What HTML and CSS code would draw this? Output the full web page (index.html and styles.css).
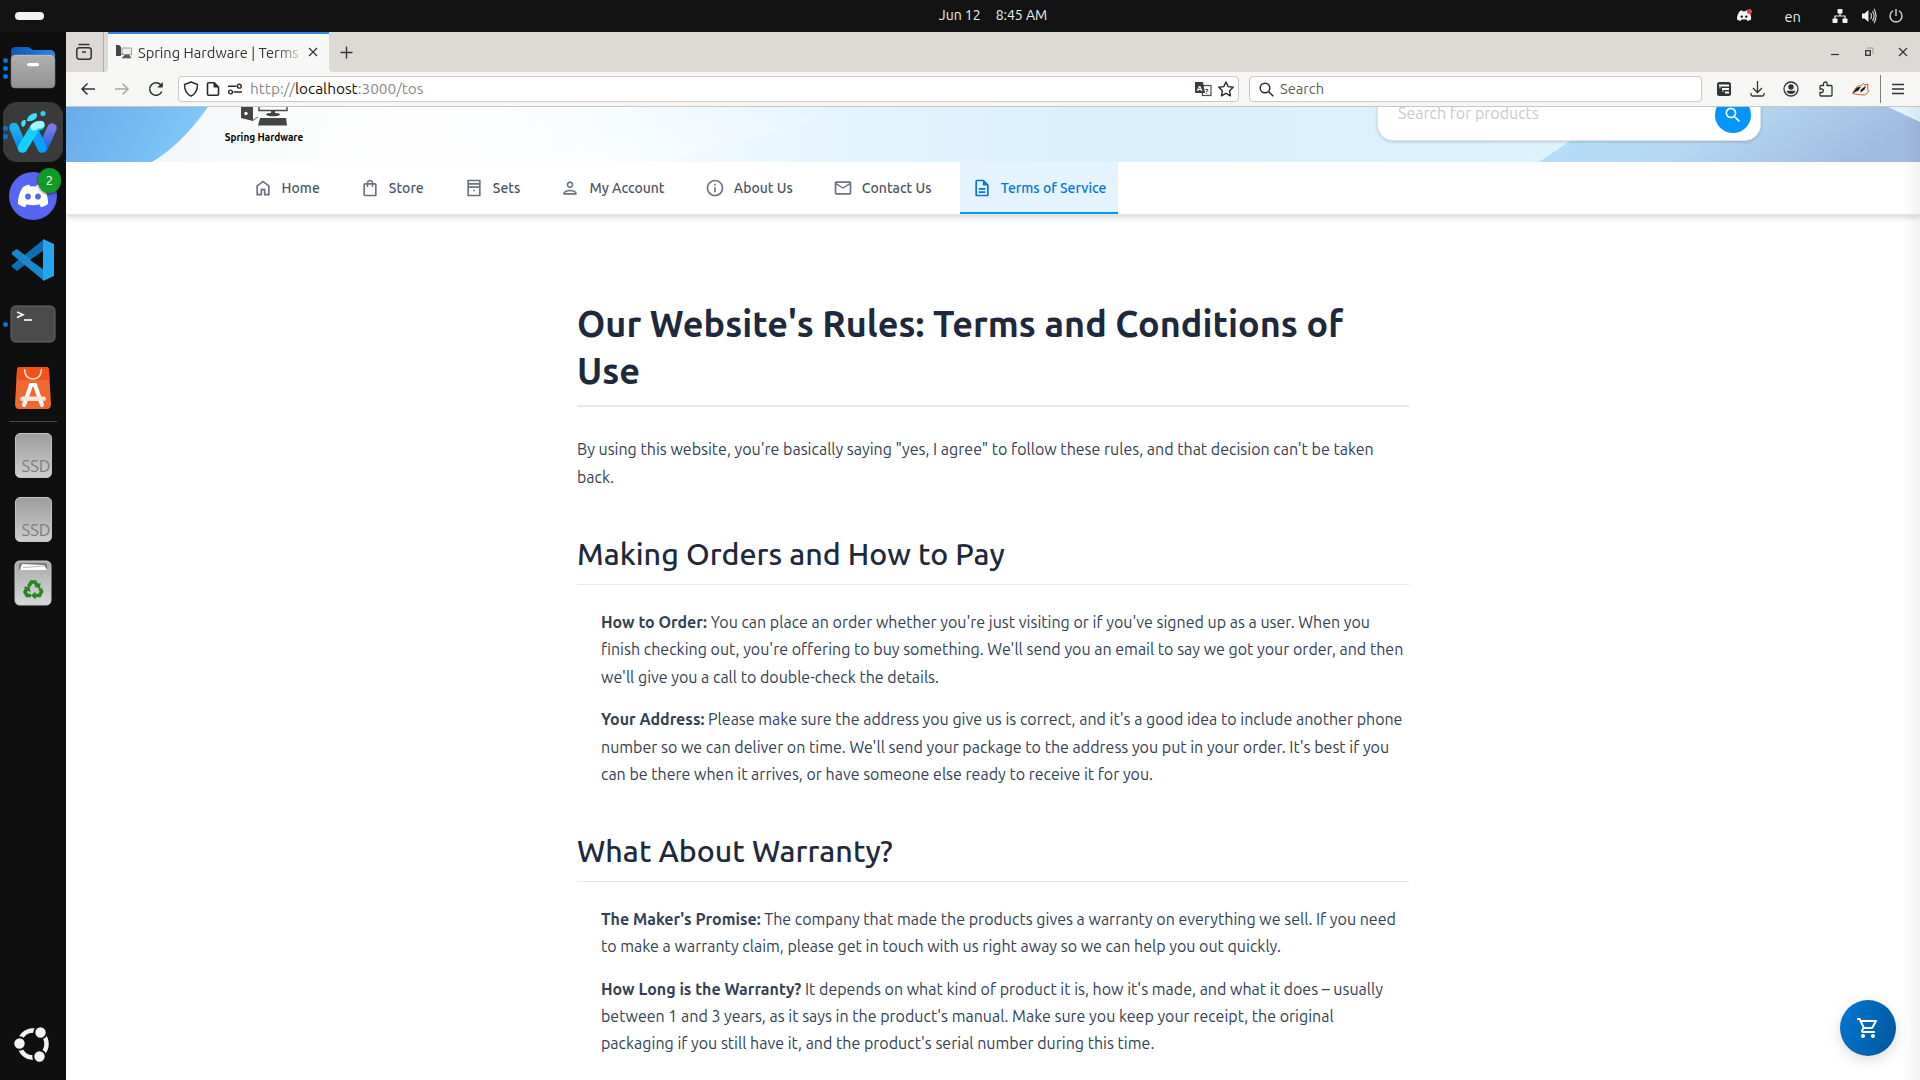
FILE: index.html
```html
<!DOCTYPE html>
<html lang="en">
<head>
<meta charset="utf-8">
<title>Spring Hardware | Terms of Service</title>
<link rel="stylesheet" href="styles.css">
</head>
<body>
<div class="desktop">
  <header class="topbar">
    <div class="activities"><span class="pill"></span></div>
    <div class="clock"><span>Jun 12</span><span>8:45 AM</span></div>
    <div class="tray">
      <svg class="tray-discord" width="17" height="14" viewBox="0 0 17 14"><path d="M4 2 6 1.3l.5 1h3L10 1.300l3 1c1.500 2.500 2.500 5 2 8.500L11.500 12l-1-1.500h-5L4.500 12 1 10.800C.8 7 2 4 4 2z" fill="#f2f2f2"/><circle cx="5.800" cy="7.600" r="1.200" fill="#131313"/><circle cx="10.200" cy="7.600" r="1.200" fill="#131313"/><circle cx="13.500" cy="2.500" r="2.500" fill="#f23f43"/></svg>
      <span class="lang">en</span>
      <svg width="16" height="16" viewBox="0 0 16 16" fill="#f2f2f2"><rect x="5.500" y="1" width="5" height="4.500" rx=".8"/><rect x="0.500" y="10.500" width="5" height="4.500" rx=".8"/><rect x="10.500" y="10.500" width="5" height="4.500" rx=".8"/><path d="M8 5v3M3 11V8h10v3" fill="none" stroke="#f2f2f2" stroke-width="1.200"/></svg>
      <svg class="tray-volume" width="16" height="16" viewBox="0 0 16 16"><path d="M1 5.500h2.500L7.500 2v12l-4-3.500H1z" fill="#f2f2f2"/><path d="M9.500 5q2 3 0 6M11.500 3.200q3.300 4.800 0 9.600M13 .8q4 7 0 14.400" fill="none" stroke="#d0d0d0" stroke-width="1.200"/></svg>
      <svg class="tray-power" width="16" height="16" viewBox="0 0 16 16" fill="none" stroke="#e4e4e4" stroke-width="1.300"><path d="M8 1v7M5 2.800a6 6 0 1 0 6 0"/></svg>
    </div>
  </header>

  <aside class="dock">
    <div class="slot"><i class="dots"><b></b><b></b><b></b></i>
      <svg width="46" height="42" viewBox="0 0 46 42"><defs><linearGradient id="fb" x1="0" y1="0" x2="1" y2="0"><stop offset="0" stop-color="#0b57b5"/><stop offset="1" stop-color="#2f86e8"/></linearGradient><linearGradient id="fg" x1="0" y1="0" x2="0" y2="1"><stop offset="0" stop-color="#b0b0b0"/><stop offset="1" stop-color="#929292"/></linearGradient></defs><path d="M1 13V4q0-4 4-4h12q2 0 3 1l3 2h17q5 0 5 5v9H1z" fill="url(#fb)"/><rect x="1" y="8" width="44" height="33" rx="4" fill="url(#fg)" stroke="#777" stroke-width=".6"/><path d="M4 8.400h38" stroke="#d0d0d0" stroke-width=".7"/><rect x="17" y="16" width="12" height="3.200" rx="1.600" fill="#fff"/></svg></div>
    <div class="slot slot-active"><i class="dots"><b></b><b></b></i>
      <svg width="60" height="60" viewBox="0 0 60 60"><defs><linearGradient id="w1" x1="0" y1="0" x2="0" y2="1"><stop offset="0" stop-color="#1ab5ee"/><stop offset="1" stop-color="#0a84f5"/></linearGradient><linearGradient id="w2" x1="0" y1="0" x2="0" y2="1"><stop offset="0" stop-color="#7a78ea"/><stop offset="1" stop-color="#1769e8"/></linearGradient></defs><g fill="none" stroke-linecap="round" stroke-linejoin="round"><path d="M49 26 40 46" stroke="url(#w2)" stroke-width="9.500"/><path d="M11 25.500 19.500 46" stroke="url(#w1)" stroke-width="9.500"/><path d="m31 29 8 17" stroke="#0a9ff8" stroke-width="9.500"/><path d="M19.500 46 31 27q2-3.500 6-3.500" stroke="#12d2fb" stroke-width="9.500"/><path d="M31 25q3-2.500 7-2.500" stroke="#a5f7fb" stroke-width="7"/></g><path d="M24 19c0-5 5-8 9.500-8 2 4-2 9-9.500 8z" fill="#35e3fb"/><circle cx="40" cy="11.500" r="2.600" fill="#2bd0f0"/><path d="M18.500 23c-1-3 .5-5 4-5 1 4-1 7-3 7z" fill="#35e3fb"/></svg></div>
    <div class="slot">
      <svg width="52" height="56" viewBox="0 0 52 56"><circle cx="26" cy="28" r="24" fill="#5865f2"/><path d="M16 19q3-2 6-2.500l1.200 2q2.800-.4 5.600 0l1.200-2q3 .5 6 2.500 5.500 8 5 17-3 2.400-7 3.300l-1.700-3q-6.300 1.800-12.600 0l-1.700 3q-4-.9-7-3.300-.5-9 5-17z" fill="#fff"/><ellipse cx="21" cy="28.500" rx="2.900" ry="3.100" fill="#5865f2"/><ellipse cx="31" cy="28.500" rx="2.900" ry="3.100" fill="#5865f2"/></svg><span class="badge">2</span></div>
    <div class="slot">
      <svg width="42" height="42" viewBox="0 0 42 42"><path d="M31 1v11L5 32 0 28V26z" fill="#0f6fb3"/><path d="M31 41V30L5 10 0 13v2.500z" fill="#1b87cf"/><path d="m31 0 11 5v32l-11 5z" fill="#27a5ef"/><path d="m31 12-13 9 13 9z" fill="#0f0f0f"/></svg></div>
    <div class="slot"><i class="dots"><b></b></i>
      <svg width="46" height="38" viewBox="0 0 46 38"><rect x="1" y="1" width="44" height="36" rx="4.500" fill="#4b4b4b" stroke="#6a6a6a"/><path d="m7 7 6 2.700-6 2.700" fill="none" stroke="#fff" stroke-width="1.600"/><path d="M14 15h8" stroke="#fff" stroke-width="1.600"/></svg></div>
    <div class="slot">
      <svg width="38" height="42" viewBox="0 0 38 42"><path d="M6 0h26q3 0 3 3l2 34q0 5-4 5H5q-4 0-4-5L3 3q0-3 3-3z" fill="#f0672f"/><path d="M6 0h26q3 0 3 3l.6 10H2.400L3 3q0-3 3-3z" fill="#f4511a"/><path d="M10.500 2q.5 10 8.500 10t8.500-10" fill="none" stroke="#ffe6da" stroke-width="1.600"/><path d="M17 18 10 38M21 18l7 20M16.500 18h5" stroke="#fff" stroke-width="4" fill="none" stroke-linecap="round"/><rect x="6" y="29.500" width="26" height="4.500" rx="2.200" fill="#fde3d8"/></svg></div>
    <hr class="dock-line">
    <div class="slot"><div class="ssd">SSD</div></div>
    <div class="slot"><div class="ssd">SSD</div></div>
    <div class="slot">
      <svg width="38" height="46" viewBox="0 0 38 46"><defs><linearGradient id="tg" x1="0" y1="0" x2="0" y2="1"><stop offset="0" stop-color="#aaa"/><stop offset="1" stop-color="#d8d8d8"/></linearGradient></defs><rect x="1" y="1" width="36" height="44" rx="4.500" fill="url(#tg)" stroke="#c8c8c8"/><path d="M5 10V6q0-3 3-3h22q3 0 3 3v4z" fill="#777"/><path d="m6 10 2-6 22 1 3 5z" fill="#fff"/><path d="M9 7.500 30 6" stroke="#888" stroke-width=".6"/><g fill="none" stroke="#26871f" stroke-width="3.600"><path d="m14.500 26.500 3-4.500h3.500l2.500 4"/><path d="m26 28.500 1.500 3-2 4H20"/><path d="M17 35.500h-4l-2-3.500 2-3.500"/></g><g fill="#26871f"><path d="m26.500 22.500-.5 6.500-5.500-2.500zM21.500 31.500v8l-4.500-4zM9.500 27l6-.5 1 6z"/></g></svg></div>
    <div class="spacer"></div>
    <div class="launcher">
      <svg width="40" height="40" viewBox="0 0 40 40"><circle cx="20" cy="20" r="13.500" fill="none" stroke="#f2f2f2" stroke-width="4.500"/><g fill="#f2f2f2" stroke="#0f0f0f" stroke-width="2"><circle cx="6.500" cy="19.500" r="6.200"/><circle cx="27.500" cy="8.500" r="6.200"/><circle cx="26.500" cy="32.500" r="6.200"/></g></svg></div>
  </aside>

  <main class="window">
    <div class="tabs">
      <div class="tab-view"><svg width="18" height="18" viewBox="0 0 18 18" fill="none" stroke="#2e3436" stroke-width="1.500"><path d="M3.500 1.500h11"/><rect x="1.800" y="4.800" width="14.400" height="11.400" rx="2.500"/><path d="M7 9h4"/></svg></div>
      <div class="tab">
        <svg width="16" height="14" viewBox="0 0 16 14"><path d="M0 0h3l2 2v9H0z" fill="#444"/><path d="M6 3h9.500v6.500H6z" fill="#eee" stroke="#888" stroke-width=".8"/><path d="M9 10h4l2 3H6zM4 11l3-3" fill="#555" stroke="#666" stroke-width=".7"/></svg>
        <span class="tab-title">Spring Hardware | Terms of Service</span>
        <svg width="10" height="10" viewBox="0 0 10 10"><path d="m1 1 8 8M9 1 1 9" stroke="#2e3436" stroke-width="1.200"/></svg>
      </div>
      <div class="tab-rest">
        <svg width="13" height="13" viewBox="0 0 13 13"><path d="M6.500.5v12M.5 6.500h12" stroke="#2e3436" stroke-width="1.400"/></svg>
        <div class="win-buttons">
          <svg width="10" height="10" viewBox="0 0 10 10"><path d="M1 7.500h8" stroke="#2e3436" stroke-width="1.200"/></svg>
          <svg width="10" height="10" viewBox="0 0 10 10" fill="none"><path d="M3 1h6v6" stroke="#999" stroke-width="1"/><rect x="1.700" y="3.700" width="4.600" height="4.600" stroke="#2e3436" stroke-width="1.300"/></svg>
          <svg width="10" height="10" viewBox="0 0 10 10"><path d="m1 1 8 8M9 1 1 9" stroke="#2e3436" stroke-width="1.200"/></svg>
        </div>
      </div>
    </div>

    <div class="toolbar">
      <div class="nav-buttons">
        <svg width="16" height="16" viewBox="0 0 16 16" fill="none" stroke="#2e3436" stroke-width="1.500"><path d="M15 8H2M7.500 2.500 2 8l5.500 5.500"/></svg>
        <svg width="16" height="16" viewBox="0 0 16 16" fill="none" stroke="#a8a8a6" stroke-width="1.500"><path d="M1 8h13M8.500 2.500 14 8l-5.500 5.500"/></svg>
        <svg width="16" height="16" viewBox="0 0 16 16" fill="none" stroke="#2e3436" stroke-width="1.500"><path d="M13.800 10.500A6.300 6.300 0 1 1 12.700 3.800l1 1.200"/><path d="M14.800 1v5.500H9.300z" fill="#2e3436" stroke="none"/></svg>
      </div>
      <div class="url">
        <svg width="16" height="16" viewBox="0 0 16 16" fill="none" stroke="#2a2a2e" stroke-width="1.400"><path d="M8 1 14.500 3.500C14.500 9 12.500 13 8 15.200 3.500 13 1.500 9 1.500 3.500z" stroke-linejoin="round"/></svg>
        <svg width="16" height="16" viewBox="0 0 16 16" fill="none" stroke="#2a2a2e" stroke-width="1.600"><path d="M3.500 1.800h5.700l4.300 4.300v6.900q0 1.200-1.200 1.200H3.700q-1.200 0-1.200-1.200V3q0-1.200 1-1.200z"/><path d="M8.500 1.500v5h5z" fill="#2a2a2e" stroke="none"/></svg>
        <svg width="16" height="16" viewBox="0 0 16 16" fill="none" stroke="#2a2a2e" stroke-width="1.400"><path d="M1 5.200h8.500M6.500 11H15"/><circle cx="12.300" cy="5.200" r="1.900"/><circle cx="3.500" cy="11" r="1.900"/></svg>
        <span class="url-text">http://<em>localhost</em>:3000/tos</span>
        <svg width="17" height="16" viewBox="0 0 17 16"><rect x="7.500" y="4.500" width="8.500" height="10" fill="#fff" stroke="#4a4a4f" stroke-width="1.200"/><path d="M0 1h8l2 11H1q-1 0-1-1z" fill="#3a3a40"/><text class="glyph glyph-a" x="1.800" y="9.500">A</text><text class="glyph" x="10.300" y="12.500">?</text></svg>
        <svg width="16" height="16" viewBox="0 0 16 16" fill="none" stroke="#2a2a2e" stroke-width="1.400" stroke-linejoin="round"><path d="m8 1 2.200 4.600 5 .7-3.600 3.500.9 5L8 12.400l-4.500 2.400.9-5L.8 6.300l5-.7z"/></svg>
      </div>
      <div class="search">
        <svg width="15" height="15" viewBox="0 0 15 15" fill="none" stroke="#2a2a2e" stroke-width="1.500"><circle cx="6" cy="6" r="4.800"/><path d="m9.500 9.500 4.800 4.800"/></svg>
        <span>Search</span>
      </div>
      <div class="actions">
        <svg width="14" height="14" viewBox="0 0 14 14"><rect width="14" height="14" rx="2.500" fill="#2e3436"/><path d="M2 3.500h10M5 7h7M8 10.500h4" stroke="#fff" stroke-width="2"/><path d="M3 5v1.500M6 8.500V10" stroke="#fff"/></svg>
        <svg width="15" height="16" viewBox="0 0 15 16" fill="none" stroke="#2e3436" stroke-width="1.300"><path d="M7.500 0v11M3 7l4.500 4.500L12 7M1 12v1.500q0 1.500 1.500 1.500h10q1.500 0 1.500-1.500V12"/></svg>
        <svg width="16" height="16" viewBox="0 0 16 16"><circle cx="8" cy="8" r="7" fill="none" stroke="#2e3436" stroke-width="1.300"/><circle cx="8" cy="6" r="2.700" fill="#2e3436"/><path d="M3.500 9.800h9Q11.500 13 8 13t-4.500-3.200z" fill="#2e3436"/></svg>
        <svg width="16" height="16" viewBox="0 0 16 16" fill="none" stroke="#2e3436" stroke-width="1.300"><path d="M2 5.500q0-1 1-1h2.500V2.800a1.800 1.800 0 0 1 3.600 0v1.700H13q1 0 1 1V14q0 1-1 1H3q-1 0-1-1v-2.500h2a1.800 1.800 0 0 0 0-3.500H2z"/></svg>
        <svg width="17" height="14" viewBox="0 0 17 14"><path d="M1 11.500 3.500 6l3-2.500 2 .5 3-2.500 1.500 1.500 3-1-.5 4 1 4-4 3-7-.5z" fill="#f5efe6" stroke="#c46a22" stroke-width="1"/><path d="m0 11.500 5-6 4-1-2.500 4zM8.500 8l5.500-4.500-1.500 4-4 3z" fill="#1c1c1c"/></svg>
        <i class="divider"></i>
        <svg width="12" height="12" viewBox="0 0 12 12"><path d="M0 1.500h12M0 6h12M0 10.500h12" stroke="#2e3436" stroke-width="1.300"/></svg>
      </div>
    </div>

    <div class="page">
      <div class="banner">
        <svg class="banner-art" viewBox="0 0 1854 55" preserveAspectRatio="none">
          <defs>
            <linearGradient id="sky" x1="0" y1="0" x2="1" y2="0"><stop offset="0" stop-color="#eef1f4"/><stop offset=".11" stop-color="#fafbfb"/><stop offset=".2" stop-color="#fefefe"/><stop offset=".3" stop-color="#f6fcff"/><stop offset=".42" stop-color="#e4f4fe"/><stop offset=".55" stop-color="#daf0fc"/><stop offset=".75" stop-color="#dbf2fd"/><stop offset="1" stop-color="#e2f3fc"/></linearGradient>
            <linearGradient id="left" x1="0" y1="0" x2="1" y2=".2"><stop offset="0" stop-color="#68abea"/><stop offset="1" stop-color="#80c8f8"/></linearGradient>
            <linearGradient id="right" x1="0" y1="0" x2="1" y2=".2"><stop offset="0" stop-color="#b5e1fa"/><stop offset=".5" stop-color="#b6d8f2"/><stop offset="1" stop-color="#a2bbe0"/></linearGradient>
            <linearGradient id="haze" x1="0" y1="0" x2="0" y2="1"><stop offset="0" stop-color="#fff" stop-opacity="0"/><stop offset="1" stop-color="#fff" stop-opacity=".35"/></linearGradient>
          </defs>
          <path d="M0 0h1854v55H0z" fill="url(#sky)"/>
          <path d="M250 0h550L600 55H250z" fill="url(#haze)"/>
          <path d="M0 0h142Q115 38 86 55H0z" fill="url(#left)"/>
          <path d="M1473 55 1504 34Q1545 8 1600 0h222l32 15v40z" fill="url(#right)"/>
        </svg>
        <div class="brand">
          <svg width="48" height="19" viewBox="0 0 48 19"><path d="M1 0h12v14L1 11z" fill="#444"/><circle cx="6" cy="6.500" r="1.700" fill="#fff"/><path d="m12 14 6-4" stroke="#555" fill="none"/><path d="M19 0v3.500h28V0" fill="#fff" stroke="#444" stroke-width="1.400"/><ellipse cx="33" cy="7.500" rx="7" ry="1.800" fill="#444"/><path d="M31 4h4v4h-4zM20 11h26l1 7.500H18z" fill="#444"/></svg>
          <strong>Spring Hardware</strong>
        </div>
        <div class="finder">
          <span>Search for products</span>
          <i class="find-btn"><svg width="20" height="20" viewBox="0 0 24 24" fill="#fff"><path d="M15.500 14h-.79l-.28-.27A6.470 6.470 0 0 0 16 9.500 6.500 6.500 0 1 0 9.500 16c1.610 0 3.090-.59 4.230-1.570l.27.28v.79l5 4.990L20.490 19l-4.990-5zm-6 0C7.010 14 5 11.990 5 9.500S7.010 5 9.500 5 14 7.010 14 9.500 11.990 14 9.500 14z"/></svg></i>
        </div>
      </div>
      <nav class="menu">
        <a class="item"><svg viewBox="0 0 24 24"><path d="M6 19h3v-6h6v6h3v-9l-6-4.500L6 10v9zm-2 2V9l8-6 8 6v12h-7v-6h-2v6H4z"/></svg>Home</a>
        <a class="item"><svg viewBox="0 0 24 24"><path d="M18 6h-2c0-2.210-1.790-4-4-4S8 3.790 8 6H6c-1.100 0-2 .9-2 2v12c0 1.100.9 2 2 2h12c1.100 0 2-.9 2-2V8c0-1.100-.9-2-2-2zm-6-2c1.100 0 2 .9 2 2h-4c0-1.100.9-2 2-2zm6 16H6V8h2v2c0 .55.45 1 1 1s1-.45 1-1V8h4v2c0 .55.45 1 1 1s1-.45 1-1V8h2v12z"/></svg>Store</a>
        <a class="item"><svg viewBox="0 0 24 24"><path fill-rule="evenodd" d="M4 2h16v20H4zM6 4v2h12V4zM6 8v2h12V8zM6 12v8h12v-8zM11 14h2v2h-2z"/></svg>Sets</a>
        <a class="item"><svg viewBox="0 0 24 24"><path d="M12 6c1.100 0 2 .9 2 2s-.9 2-2 2-2-.9-2-2 .9-2 2-2m0 10c2.700 0 5.800 1.290 6 2H6c.23-.72 3.310-2 6-2m0-12C9.790 4 8 5.790 8 8s1.790 4 4 4 4-1.790 4-4-1.790-4-4-4zm0 10c-2.670 0-8 1.340-8 4v2h16v-2c0-2.660-5.330-4-8-4z"/></svg>My Account</a>
        <a class="item"><svg viewBox="0 0 24 24"><path d="M11 7h2v2h-2zm0 4h2v6h-2zm1-9C6.480 2 2 6.480 2 12s4.480 10 10 10 10-4.480 10-10S17.520 2 12 2zm0 18c-4.410 0-8-3.590-8-8s3.590-8 8-8 8 3.590 8 8-3.590 8-8 8z"/></svg>About Us</a>
        <a class="item"><svg viewBox="0 0 24 24"><path d="M22 6c0-1.100-.9-2-2-2H4c-1.100 0-2 .9-2 2v12c0 1.100.9 2 2 2h16c1.100 0 2-.9 2-2V6zm-2 0-8 5-8-5h16zm0 12H4V8l8 5 8-5v10z"/></svg>Contact Us</a>
        <a class="item item-on"><svg viewBox="0 0 24 24"><path d="M8 16h8v2H8zm0-4h8v2H8zm6-10H6c-1.100 0-2 .9-2 2v16c0 1.100.89 2 1.990 2H18c1.100 0 2-.9 2-2V8l-6-6zm4 18H6V4h7v5h5v11z"/></svg>Terms of Service</a>
      </nav>
      <article class="terms">
        <h1>Our Website's Rules: Terms and Conditions of Use</h1>
        <p>By using this website, you're basically saying "yes, I agree" to follow these rules, and that decision can't be taken back.</p>
        <h2>Making Orders and How to Pay</h2>
        <ul>
          <li><strong>How to Order:</strong> You can place an order whether you're just visiting or if you've signed up as a user. When you finish checking out, you're offering to buy something. We'll send you an email to say we got your order, and then we'll give you a call to double-check the details.</li>
          <li><strong>Your Address:</strong> Please make sure the address you give us is correct, and it's a good idea to include another phone number so we can deliver on time. We'll send your package to the address you put in your order. It's best if you can be there when it arrives, or have someone else ready to receive it for you.</li>
        </ul>
        <h2>What About Warranty?</h2>
        <ul>
          <li><strong>The Maker's Promise:</strong> The company that made the products gives a warranty on everything we sell. If you need to make a warranty claim, please get in touch with us right away so we can help you out quickly.</li>
          <li><strong>How Long is the Warranty?</strong> It depends on what kind of product it is, how it's made, and what it does – usually between 1 and 3 years, as it says in the product's manual. Make sure you keep your receipt, the original packaging if you still have it, and the product's serial number during this time.</li>
        </ul>
      </article>
      <div class="edge"></div>
      <div class="cart"><svg width="24" height="24" viewBox="0 0 24 24" fill="#fff"><path d="M15.550 13c.75 0 1.410-.41 1.750-1.030l3.580-6.490A.996.996 0 0 0 20.010 4H5.210l-.94-2H1v2h2l3.600 7.590-1.350 2.440C4.520 15.370 5.480 17 7 17h12v-2H7l1.100-2h7.450zM6.160 6h12.150l-2.760 5H8.530L6.160 6zM7 18c-1.100 0-1.990.9-1.990 2S5.900 22 7 22s2-.9 2-2-.9-2-2-2zm10 0c-1.100 0-1.990.9-1.990 2s.89 2 1.990 2 2-.9 2-2-.9-2-2-2z"/></svg></div>
    </div>
  </main>
</div>
</body>
</html>
```
FILE: styles.css
```css
* { box-sizing: border-box; }
body {
  margin: 0;
  font-family: Ubuntu, "Noto Sans", sans-serif;
  background: #fff;
  overflow: hidden;
}
svg { display: block; flex: none; }

.desktop {
  display: grid;
  grid-template: 32px 1048px / 66px 1854px;
  width: 1920px;
  height: 1080px;
}

/* Top panel */
.topbar {
  grid-column: 1 / 3;
  display: grid;
  grid-template-columns: 1fr auto 1fr;
  align-items: center;
  background: #131313;
  color: #f2f2f2;
  font-size: 14px;
}
.activities { padding-left: 15px; }
.pill { display: block; width: 29px; height: 8px; border-radius: 4px; background: #f2f2f2; }
.clock { display: flex; gap: 15px; padding: 0 0 2px 66px; }
.tray { display: flex; align-items: center; justify-content: flex-end; padding-right: 16px; }
.lang { margin: 0 31px 0 32px; font-size: 14.670px; color: #dfeaf2; }
.tray-volume { margin-left: 13px; }
.tray-power { margin-left: 11px; }

/* Dock */
.dock {
  display: flex;
  flex-direction: column;
  align-items: center;
  padding-top: 4px;
  background: #0f0f0f;
}
.slot {
  position: relative;
  display: flex;
  flex: none;
  align-items: center;
  justify-content: center;
  width: 60px;
  height: 64px;
}
.slot-active { height: 60px; margin: 2px 0; border-radius: 14px; background: #3a3a3a; }
.dots {
  position: absolute;
  left: 0;
  top: 0;
  bottom: 0;
  display: flex;
  flex-direction: column;
  justify-content: center;
  gap: 3px;
}
.dots b { width: 5px; height: 5px; border-radius: 50%; background: #0073e5; }
.badge {
  position: absolute;
  left: 35px;
  top: 4px;
  width: 23px;
  height: 25px;
  border-radius: 12px;
  background: #109a26;
  box-shadow: 0 1px 3px rgba(0, 0, 0, .6);
  color: #fff;
  font-size: 13px;
  line-height: 25px;
  text-align: center;
}
.dock-line { flex: none; width: 48px; height: 1px; margin: 1px 0; border: 0; background: #4a4a4a; }
.ssd {
  display: flex;
  align-items: flex-end;
  justify-content: flex-end;
  width: 37px;
  height: 45px;
  border: 1px solid #c4c4c4;
  border-radius: 5px;
  background: linear-gradient(#9d9d9d, #cdcdcd);
  color: #7d7d7d;
  font-size: 16.500px;
  line-height: 22px;
}
.spacer { flex: 1; }
.launcher { padding-bottom: 16px; }

/* Browser chrome */
.window { display: flex; flex-direction: column; background: #fff; }
.tabs { display: flex; height: 40px; background: #f7f7f6; }
.tab-view {
  display: flex;
  align-items: center;
  justify-content: center;
  width: 42px;
  padding-right: 6px;
  background: linear-gradient(90deg, transparent 37px, #b5b2ae 37px 38px, transparent 38px) #dddad5;
  border-radius: 0 0 4px 0;
}
.tab {
  display: flex;
  align-items: center;
  width: 221px;
  padding: 0 11px 2px 8px;
  border-top: 2px solid #3584e4;
}
.tab-title {
  flex: 1;
  margin: 0 6px 0 6px;
  overflow: hidden;
  white-space: nowrap;
  color: #2e3436;
  font-size: 14.670px;
  -webkit-mask-image: linear-gradient(90deg, #000 84%, transparent 102%);
  mask-image: linear-gradient(90deg, #000 84%, transparent 102%);
}
.tab-rest {
  display: flex;
  flex: 1;
  align-items: center;
  justify-content: space-between;
  padding: 0 12px 0 11px;
  background: #dddad5;
  border-radius: 0 0 0 4px;
}
.win-buttons { display: flex; gap: 24px; }
.toolbar {
  display: flex;
  align-items: center;
  height: 35px;
  border-bottom: 1px solid #c9c4bd;
  background: #f6f6f4;
}
.nav-buttons { display: flex; gap: 18px; width: 112px; padding-left: 14px; }
.url, .search {
  display: flex;
  align-items: center;
  height: 26px;
  border: 1px solid #ccc7c1;
  border-radius: 4px;
  background: #fff;
  font-size: 14.670px;
}
.url { gap: 6px; width: 1061px; padding: 0 4px; }
.url-text { flex: 1; margin-left: 1px; padding-bottom: 1px; color: #8a8a8a; font-size: 15.400px; }
.url-text em { color: #111; font-style: normal; }
.glyph { font: 700 7px Ubuntu, "Noto Sans", sans-serif; fill: #3a3a40; }
.glyph-a { fill: #fff; font-size: 8px; }
.search { gap: 6px; width: 453px; margin-left: 10px; padding-left: 9px; color: #5c5c5c; }
.search span { padding-bottom: 2px; }
.actions { display: flex; flex: 1; align-items: center; justify-content: space-between; padding: 0 16px 0 15px; }
.divider { width: 1px; height: 28px; background: #7b7b7b; margin: 0 -7px 0 -8px; }

/* Shop page */
.page { position: relative; flex: 1; overflow: hidden; }
.banner {
  position: relative;
  display: flex;
  align-items: flex-start;
  justify-content: space-between;
  height: 55px;
  padding: 0 159px;
  overflow: hidden;
}
.banner-art { position: absolute; inset: 0; width: 100%; height: 100%; }
.brand { position: relative; display: flex; flex-direction: column; align-items: center; gap: 5px; width: 78px; color: #000; font-size: 10px; line-height: 14px; white-space: nowrap; }
.finder {
  position: relative;
  display: flex;
  align-items: center;
  justify-content: space-between;
  width: 384px;
  height: 52px;
  margin-top: -18.500px;
  padding: 0 9px 0 20px;
  border: 1px solid #dfe3ea;
  border-radius: 16px;
  background: #fff;
  box-shadow: 0 1px 3px rgba(0, 0, 0, .18);
  color: #c6c9cf;
  font-size: 16px;
}
.finder span { padding-bottom: 3px; }
.find-btn {
  display: flex;
  align-items: center;
  justify-content: center;
  width: 36px;
  height: 36px;
  border-radius: 50%;
  background: #0095ff;
}
.menu {
  display: flex;
  gap: 16px;
  height: 53px;
  padding-left: 174.500px;
  border-bottom: 1px solid #e5e7eb;
  box-shadow: 0 2px 6px rgba(0, 0, 0, .18);
}
.item {
  display: flex;
  align-items: center;
  gap: 9.100px;
  padding: 2px 12px 0;
  border-bottom: 2px solid transparent;
  color: #4b5563;
  font-size: 14px;
  font-weight: 500;
}
.item svg { width: 20px; height: 20px; fill: #6b7280; }
.item-on { border-color: #0095ff; background: #e5f3ff; color: #0078d4; }
.item-on svg { fill: #0078d4; }

.terms { width: 832px; margin: 86px 0 0 511px; color: #334155; font-size: 16px; line-height: 27.200px; }
.terms h1 {
  margin: 0 0 28.600px;
  padding-bottom: 10px;
  border-bottom: 2px solid #e2e8f0;
  color: #1e293b;
  font-size: 36px;
  font-weight: 600;
  letter-spacing: .035px;
  line-height: 46.800px;
}
.terms p { margin: 0; line-height: 28px; }
.terms h2 {
  margin: 43.600px 0 24px;
  padding-bottom: 10px;
  border-bottom: 1px solid #e2e8f0;
  color: #1e293b;
  font-size: 30.400px;
  font-weight: 500;
  line-height: 39.500px;
}
.terms ul { display: flex; flex-direction: column; gap: 15.500px; margin: 0; padding: 0 0 0 24px; list-style: none; }
.terms strong { font-weight: 600; }

.edge { position: absolute; top: 0; right: 0; width: 18px; height: 100%; background: linear-gradient(90deg, transparent, rgba(0, 0, 0, .05)); }
.cart {
  position: absolute;
  right: 24px;
  bottom: 24px;
  display: flex;
  align-items: center;
  justify-content: center;
  width: 56px;
  height: 56px;
  border-radius: 50%;
  background: linear-gradient(110deg, #0078d4, #00569a);
  box-shadow: 0 4px 14px rgba(0, 0, 0, .15);
}
```
